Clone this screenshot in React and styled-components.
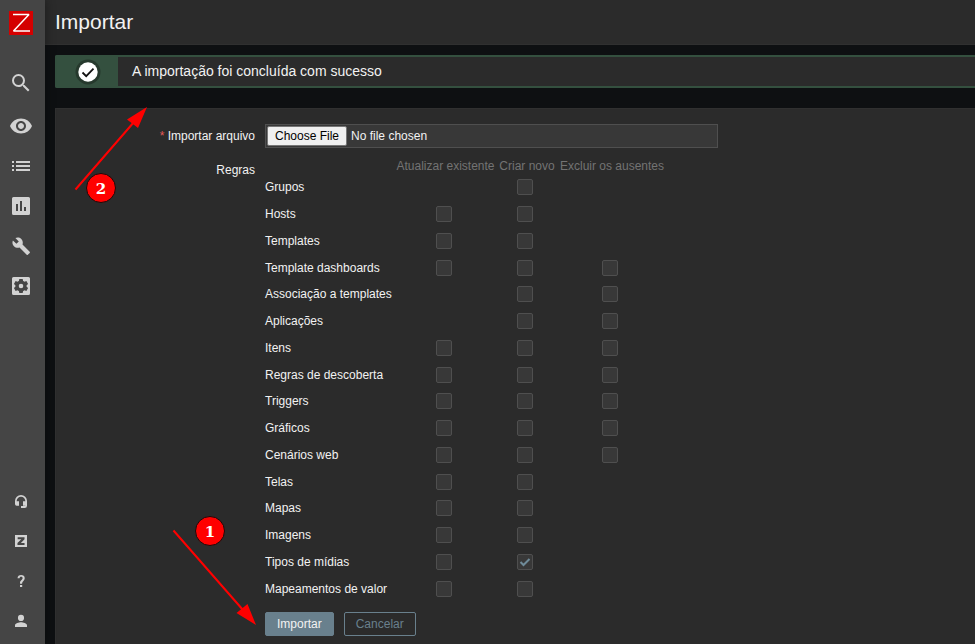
import React, { useState } from "react";
import styled, { createGlobalStyle, css } from "styled-components";

const GlobalStyle = createGlobalStyle`
  * { box-sizing: border-box; }
  body {
    margin: 0;
    background: #0e1012;
    color: #f2f2f2;
    font-family: "Liberation Sans", Arial, sans-serif;
    font-size: 12px;
    line-height: 16px;
  }
`;

const Page = styled.div`
  position: relative;
  display: flex;
  min-height: 100vh;
`;

const Sidebar = styled.aside`
  display: flex;
  flex-direction: column;
  flex: none;
  width: 45px;
  padding: 11px 0 3px;
  background: #454545;
  box-shadow: 0 0 10px rgba(0, 0, 0, 0.4);
  z-index: 1;
`;

const Logo = styled.a`
  display: block;
  width: 24px;
  height: 24px;
  margin: 0 0 28px 9px;
`;

const Nav = styled.nav`
  display: flex;
  flex-direction: column;
  ${(p) => p.$bottom && css`margin-top: auto;`}
`;

const itemStyle = css`
  display: flex;
  align-items: center;
  justify-content: center;
  width: 42px;
  height: 40px;
  padding: 0;
  border: 0;
  background: none;
  color: #d2d2d2;
  cursor: pointer;
`;

const NavLink = styled.a`${itemStyle}`;

const SearchButton = styled.button`
  ${itemStyle}
  margin-bottom: 3px;
`;

const Icon = styled.svg`
  display: block;
  width: ${(p) => p.$size}px;
  height: ${(p) => p.$size}px;
  fill: currentColor;
`;

const Main = styled.main`
  display: flex;
  flex-direction: column;
  flex: 1;
  min-width: 0;
`;

const Header = styled.header`
  height: 45px;
  padding: 0 10px;
  background: #2b2b2b;
  border-bottom: 1px solid #303030;
`;

const Title = styled.h1`
  margin: 0;
  font-size: 21px;
  line-height: 44px;
  font-weight: 400;
`;

const Message = styled.output`
  display: flex;
  height: 33px;
  margin: 10px 0 20px 10px;
  background: #2b2b2b;
  border: solid #34503f;
  border-width: 2px 0 2px 2px;
  border-radius: 2px 0 0 2px;
`;

const MessageIcon = styled.span`
  display: flex;
  align-items: center;
  justify-content: center;
  width: 61px;
  background: #34503f;
`;

const MessageText = styled.span`
  padding-left: 14px;
  font-size: 14px;
  line-height: 29px;
`;

const Form = styled.form`
  display: grid;
  grid-template-columns: 199px minmax(0, 1fr);
  grid-template-rows: auto auto 1fr;
  gap: 10px;
  flex: 1;
  margin-left: 10px;
  padding-top: 15px;
  background: #2b2b2b;
  border: solid #303030;
  border-width: 1px 0 0 1px;
`;

const Label = styled.label`
  text-align: right;
  line-height: 24px;
`;

const Required = styled.span`
  color: #e45959;
`;

const FileInput = styled.input`
  width: 100%;
  max-width: 453px;
  height: 24px;
  padding: 1px;
  color: #f2f2f2;
  font: inherit;
  background: #383838;
  border: 1px solid #4f4f4f;

  &::file-selector-button {
    height: 20px;
    margin: 0 4px 0 0;
    padding: 0 7px;
    color: #000;
    font: inherit;
    background: #efefef;
    border: 1px solid #767676;
    border-radius: 2px;
  }
`;

const Rules = styled.table`
  width: 402px;
  height: 444px;
  table-layout: fixed;
  border-collapse: collapse;
`;

const Col = styled.col`
  width: ${(p) => p.$width}px;
`;

const HeadCell = styled.th`
  height: 16px;
  padding: 0;
  color: #737373;
  font-weight: 400;
  white-space: nowrap;
`;

const RuleName = styled.th`
  padding: 0;
  font-weight: 400;
  text-align: left;
  white-space: nowrap;
`;

const RuleCell = styled.td`
  padding: 0 4px 0 0;
  text-align: center;
`;

const CheckLabel = styled.label`
  display: grid;
  place-items: center;
`;

const CheckInput = styled.input`
  grid-area: 1 / 1;
  appearance: none;
  width: 16px;
  height: 16px;
  margin: 0;
  background: #383838;
  border: 1px solid #4f4f4f;
  border-radius: 2px;
  & + svg { visibility: hidden; }
  &:checked + svg { visibility: visible; }
`;

const CheckMark = styled.svg`
  grid-area: 1 / 1;
  width: 12px;
  height: 12px;
  fill: none;
  stroke: #6f8b99;
  stroke-width: 2;
  pointer-events: none;
`;

const Actions = styled.div`
  display: flex;
  grid-column: 2;
  align-items: flex-start;
  gap: 10px;
`;

const Button = styled.button`
  height: 24px;
  padding: 0 11px;
  color: ${(p) => (p.$primary ? "#f2f2f2" : "#69808d")};
  font: inherit;
  line-height: 22px;
  background: ${(p) => (p.$primary ? "#69808d" : "transparent")};
  border: 1px solid #69808d;
  border-radius: 2px;
`;

const Annotations = styled.svg`
  position: absolute;
  top: 0;
  left: 0;
  width: 260px;
  height: 640px;
  pointer-events: none;
  z-index: 2;
`;

const Badge = styled.span`
  position: absolute;
  left: ${(p) => p.$x}px;
  top: ${(p) => p.$y}px;
  width: 30px;
  height: 30px;
  color: #fff;
  font: bold 15px/30px "DejaVu Serif", serif;
  text-align: center;
  background: #f00;
  border: 1px solid #1a0a0a;
  border-radius: 50%;
  z-index: 3;
`;

const mainMenu = [
  ["Monitoramento", "M12 4.5C7 4.5 2.73 7.61 1 12c1.73 4.39 6 7.5 11 7.5s9.27-3.11 11-7.5c-1.73-4.39-6-7.5-11-7.5zM12 17c-2.76 0-5-2.24-5-5s2.24-5 5-5 5 2.24 5 5-2.24 5-5 5zm0-8c-1.66 0-3 1.34-3 3s1.34 3 3 3 3-1.34 3-3-1.34-3-3-3z"],
  ["Inventário", "M3 7h2v2H3zM3 11h2v2H3zM3 15h2v2H3zM7 7h14v2H7zM7 11h14v2H7zM7 15h14v2H7z"],
  ["Relatórios", "M19.5 3h-15A1.5 1.5 0 0 0 3 4.5v15A1.5 1.5 0 0 0 4.5 21h15a1.5 1.5 0 0 0 1.500-1.500v-15A1.5 1.5 0 0 0 19.500 3zM9 17H7v-7h2v7zm4 0h-2V7h2v10zm4 0h-2v-4h2v4z"],
  ["Configuração", "M20.7 17.7l-7.2-7.2c.7-1.8.3-4-1.2-5.500C10.700 3.400 8.300 3.100 6.400 4l3.400 3.400-2.400 2.400-3.500-3.400C3 8.300 3.400 10.700 5 12.300c1.500 1.500 3.700 1.900 5.500 1.200l7.200 7.200c.3.300.8.300 1.100 0l1.900-1.800c.4-.3.400-.9 0-1.200z"],
  ["Administração", "M4.500 3h15A1.500 1.500 0 0 1 21 4.500v15a1.500 1.500 0 0 1-1.500 1.500h-15A1.500 1.500 0 0 1 3 19.500v-15A1.500 1.500 0 0 1 4.500 3zM10.300 5l-.4 2a5.500 5.500 0 0 0-1.400.8l-1.900-.7-1.700 3 1.500 1.200a5.500 5.500 0 0 0 0 1.500l-1.500 1.200 1.700 3 1.900-.7c.4.300.9.600 1.400.8l.4 1.900h3.400l.4-1.900c.5-.2 1-.5 1.400-.8l1.900.7 1.700-3-1.500-1.200a5.500 5.500 0 0 0 0-1.500l1.500-1.200-1.700-3-1.900.7a5.500 5.500 0 0 0-1.400-.8l-.4-2zM12 9.700a2.300 2.300 0 1 1 0 4.600 2.300 2.300 0 0 1 0-4.600z"],
];

const supportMenu = [
  ["Suporte", "M12 3a9 9 0 0 0-9 9v4.500A2.500 2.500 0 0 0 5.500 19H9v-6.500H5.500V12a6.500 6.500 0 0 1 13 0v.5H15V19h3.500v.5H12v3h5.500a3.500 3.500 0 0 0 3.500-3.500V12a9 9 0 0 0-9-9z"],
  ["Share", "M3 3h18v18H3zM7 6.500v3h5.500L6.700 15v3h10.600v-3h-5.500l5.500-5.500v-3z"],
  ["Ajuda", "M10.500 18h3.300v3h-3.300zM12.200 3C9 3 7 4.700 6.800 7.700h3.100c.1-1.300.9-2 2.300-2 1.300 0 2.200.7 2.200 2 0 2.200-3.900 3.200-3.900 7v1.500h3.200v-1c0-2.500 3.900-3.700 3.900-7.500C17.600 4.700 15.400 3 12.200 3z"],
  ["Usuário", "M12 12a4.600 4.600 0 1 0 0-9.200A4.600 4.600 0 0 0 12 12zm0 2c-3 0-9 1.500-9 4.500V21h18v-2.500c0-3-6-4.500-9-4.500z"],
];

/* Which of update / create / delete each rule offers. */
const rules = [
  ["Grupos", 0, 1, 0],
  ["Hosts", 1, 1, 0],
  ["Templates", 1, 1, 0],
  ["Template dashboards", 1, 1, 1],
  ["Associação a templates", 0, 1, 1],
  ["Aplicações", 0, 1, 1],
  ["Itens", 1, 1, 1],
  ["Regras de descoberta", 1, 1, 1],
  ["Triggers", 1, 1, 1],
  ["Gráficos", 1, 1, 1],
  ["Cenários web", 1, 1, 1],
  ["Telas", 1, 1, 0],
  ["Mapas", 1, 1, 0],
  ["Imagens", 1, 1, 0],
  ["Tipos de mídias", 1, 1, 0],
  ["Mapeamentos de valor", 1, 1, 0],
];

const actions = ["Atualizar existente", "Criar novo", "Excluir os ausentes"];

function RuleCheck({ label, initial }) {
  const [checked, setChecked] = useState(initial);
  return (
    <CheckLabel>
      <CheckInput
        type="checkbox"
        aria-label={label}
        checked={checked}
        onChange={(e) => setChecked(e.target.checked)}
      />
      <CheckMark viewBox="0 0 12 12" aria-hidden="true">
        <path d="M1.500 6l3 3 6-6" />
      </CheckMark>
    </CheckLabel>
  );
}

function Menu({ items, size, bottom, label }) {
  return (
    <Nav $bottom={bottom} aria-label={label}>
      {items.map(([name, d]) => (
        <NavLink href="#" key={name} aria-label={name}>
          <Icon $size={size} viewBox="0 0 24 24">
            <path fillRule="evenodd" d={d} />
          </Icon>
        </NavLink>
      ))}
    </Nav>
  );
}

export default function App() {
  return (
    <>
      <GlobalStyle />
      <Page>
        <Sidebar>
          <Logo href="#" aria-label="Zabbix">
            <Icon $size={24} viewBox="0 0 24 24">
              <path fill="#d40000" d="M0 0h24v24H0z" />
              <path fill="none" stroke="#fff" strokeWidth="1.500" strokeLinejoin="bevel" d="M4 3.500h16L4.500 20H21" />
            </Icon>
          </Logo>
          <SearchButton type="button" aria-label="Pesquisar">
            <Icon $size={24} viewBox="0 0 24 24">
              <path d="M15.500 14h-.790l-.280-.270A6.471 6.471 0 0 0 16 9.500 6.500 6.500 0 1 0 9.500 16c1.610 0 3.090-.590 4.230-1.570l.270.280v.790l5 4.990L20.490 19l-4.990-5zm-6 0C7.010 14 5 11.990 5 9.500S7.010 5 9.500 5 14 7.010 14 9.500 11.990 14 9.500 14z" />
            </Icon>
          </SearchButton>
          <Menu items={mainMenu} size={24} label="Principal" />
          <Menu items={supportMenu} size={16} bottom label="Ajuda e usuário" />
        </Sidebar>
        <Main>
          <Header>
            <Title>Importar</Title>
          </Header>
          <Message>
            <MessageIcon>
              <Icon $size={26} viewBox="0 0 26 26" aria-hidden="true">
                <circle cx="13" cy="13" r="12.500" fill="#26392d" />
                <circle cx="13" cy="13" r="9.700" fill="#fff" />
                <path fill="none" stroke="#111" strokeWidth="1.800" d="M7.500 13.500l3.700 3.700 7.300-7.500" />
              </Icon>
            </MessageIcon>
            <MessageText>A importação foi concluída com sucesso</MessageText>
          </Message>
          <Form onSubmit={(e) => e.preventDefault()}>
            <Label htmlFor="import-file">
              <Required>*</Required> Importar arquivo
            </Label>
            <FileInput id="import-file" type="file" />
            <Label as="span" id="rules-label">Regras</Label>
            <Rules aria-labelledby="rules-label">
              <colgroup>
                <Col $width={129} />
                <Col $width={103} />
                <Col $width={60} />
                <Col $width={110} />
              </colgroup>
              <thead>
                <tr>
                  <HeadCell as="td" />
                  {actions.map((a) => <HeadCell key={a} scope="col">{a}</HeadCell>)}
                </tr>
              </thead>
              <tbody>
                {rules.map(([name, ...offered]) => (
                  <tr key={name}>
                    <RuleName scope="row">{name}</RuleName>
                    {offered.map((on, i) => (
                      <RuleCell key={actions[i]}>
                        {on ? (
                          <RuleCheck
                            label={`${name}: ${actions[i]}`}
                            initial={name === "Tipos de mídias" && i === 1}
                          />
                        ) : null}
                      </RuleCell>
                    ))}
                  </tr>
                ))}
              </tbody>
            </Rules>
            <Actions>
              <Button type="submit" $primary>Importar</Button>
              <Button type="button">Cancelar</Button>
            </Actions>
          </Form>
        </Main>
        <Annotations viewBox="0 0 260 640" aria-hidden="true">
          <path stroke="#f00" strokeWidth="2" d="M75.500 189.500L134 122M173.500 530.500L243 610" />
          <path fill="#f00" d="M147 107L127 119.500L138 128zM256 625L236.500 613L247.500 604z" />
        </Annotations>
        <Badge $x={86} $y={173}>2</Badge>
        <Badge $x={195} $y={516}>1</Badge>
      </Page>
    </>
  );
}
